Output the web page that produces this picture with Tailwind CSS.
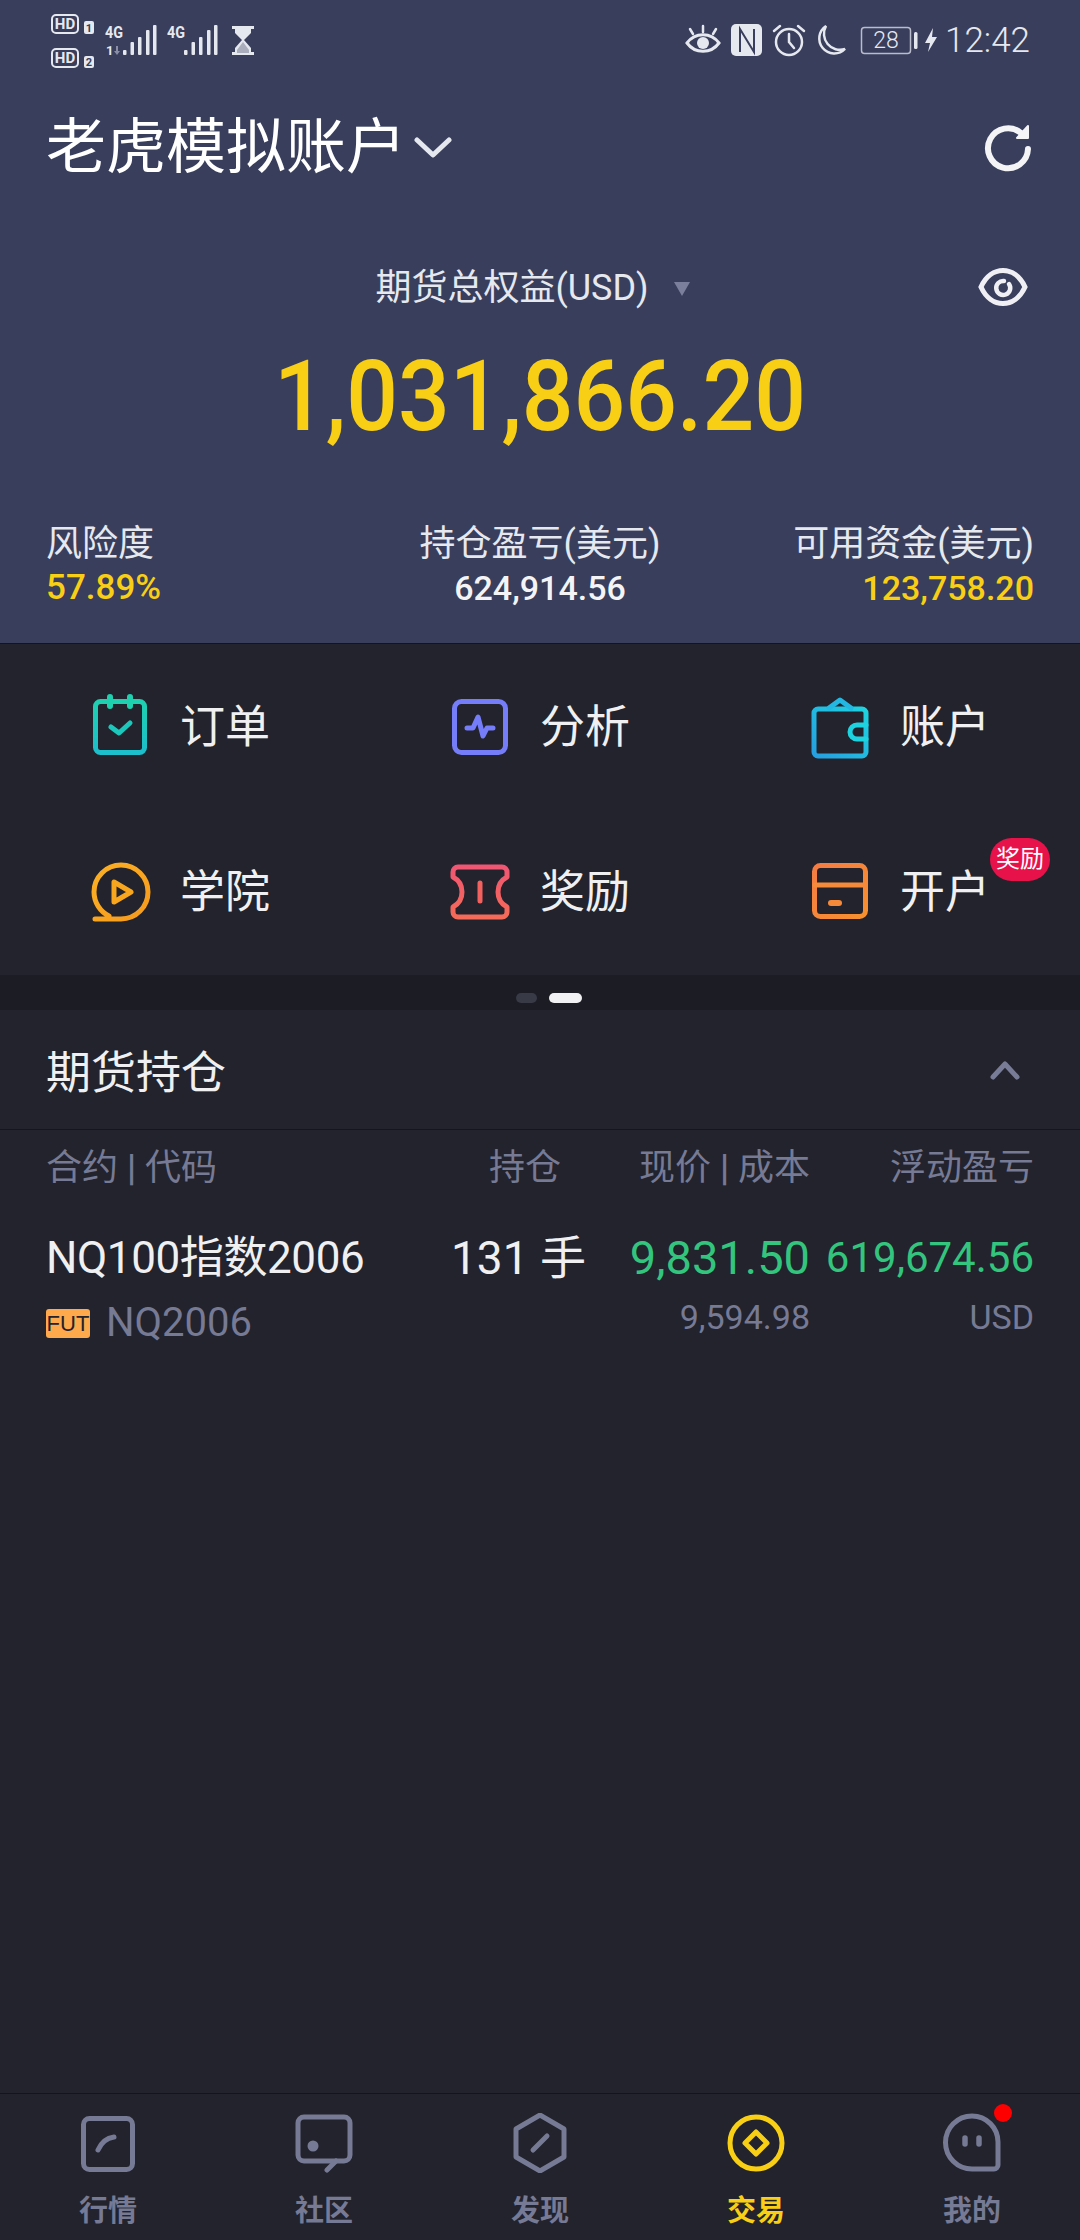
<!doctype html>
<html>
<head>
  <meta charset="UTF-8">
  <meta name="viewport" content="width=device-width, initial-scale=1.0">
  <script src="https://cdn.jsdelivr.net/npm/@tailwindcss/browser@4"></script>
</head>
<body class="bg-[#22232d] font-['Roboto','Noto_Sans_CJK_SC',sans-serif] text-[#f0f0f2] w-[1080px] h-[2240px] flex flex-col overflow-hidden">

  <!-- Header -->
  <div class="bg-[#383e5c] h-[643px] flex flex-col shrink-0">
    <!-- Status bar -->
    <div class="h-[68px] flex justify-between items-start relative">
      <svg width="270" height="68" viewBox="0 0 270 68" fill="#e6e8ef">
        <rect x="52" y="15" width="26" height="18" rx="4" fill="none" stroke="#e6e8ef" stroke-width="2"/>
        <text x="65" y="29" font-size="15" font-weight="700" text-anchor="middle" font-family="Roboto">HD</text>
        <rect x="84" y="21" width="10" height="13" rx="2"/>
        <text x="89" y="32" font-size="11" font-weight="700" text-anchor="middle" fill="#383e5c" font-family="Roboto">1</text>
        <rect x="52" y="49" width="26" height="18" rx="4" fill="none" stroke="#e6e8ef" stroke-width="2"/>
        <text x="65" y="63" font-size="15" font-weight="700" text-anchor="middle" font-family="Roboto">HD</text>
        <rect x="84" y="56" width="10" height="12" rx="2"/>
        <text x="89" y="66" font-size="11" font-weight="700" text-anchor="middle" fill="#383e5c" font-family="Roboto">2</text>
        <text x="105" y="38" font-size="17" font-weight="700" textLength="18" lengthAdjust="spacingAndGlyphs" font-family="Roboto">4G</text>
        <text x="106" y="55" font-size="13" font-weight="700" font-family="Roboto">1</text>
        <path d="M116 46v5h-2l3 4 3-4h-2v-5z" fill="#8b8fa6"/>
        <rect x="123" y="50" width="3.5" height="5" rx="1"/>
        <rect x="130.500" y="42" width="3.500" height="13" rx="1"/>
        <rect x="138" y="37" width="3.500" height="18" rx="1"/>
        <rect x="146" y="30" width="3.500" height="25" rx="1"/>
        <rect x="153" y="25" width="3.500" height="30" rx="1"/>
        <text x="167" y="38" font-size="17" font-weight="700" textLength="18" lengthAdjust="spacingAndGlyphs" font-family="Roboto">4G</text>
        <rect x="184" y="50" width="3.500" height="5" rx="1"/>
        <rect x="191.500" y="42" width="3.500" height="13" rx="1"/>
        <rect x="199" y="37" width="3.500" height="18" rx="1"/>
        <rect x="207" y="30" width="3.500" height="25" rx="1"/>
        <rect x="214" y="25" width="3.500" height="30" rx="1"/>
        <path d="M232 26h22v3h-3v4l-7 7 7 8v4h3v3h-22v-3h3v-4l7-8-7-7v-4h-3z"/>
        <path d="M243 42l-6 8v3h12v-3z" fill="#383e5c" opacity="0.35"/>
      </svg>
      <div class="flex items-start">
        <svg width="262" height="68" viewBox="680 0 262 68" fill="none" stroke="#e6e8ef" stroke-width="2.500">
          <path d="M688 43c8-11 24-11 32 0c-8 11-24 11-32 0z" stroke-width="3"/>
          <circle cx="704" cy="43" r="6" fill="#e6e8ef" stroke="none"/>
          <path d="M704 26v6M691 29l3 5M717 29l-3 5" stroke-linecap="round"/>
          <rect x="732" y="24" width="31" height="32" rx="5" fill="#e6e8ef" stroke="none"/>
          <path d="M741 52V29l14 23V29" stroke="#383e5c" stroke-width="2"/>
          <circle cx="790" cy="42" r="13"/>
          <path d="M790 34v8l5 6M775 31l6-5M805 31l-6-5" stroke-linecap="round"/>
          <path d="M827 26a15 15 0 1 0 19 23a16 16 0 0 1-19-23z"/>
          <rect x="862.500" y="27.500" width="49" height="26" rx="3" stroke="#b9bcca" stroke-width="1.500"/>
          <text x="887" y="48" font-size="23" font-family="Roboto" font-weight="300" text-anchor="middle" fill="#e6e8ef" stroke="none">28</text>
          <rect x="915" y="32" width="3.500" height="17" rx="1.500" fill="#e6e8ef" stroke="none"/>
          <path d="M934 28l-8 15h5l-2 9 9-15h-5z" fill="#e6e8ef" stroke="none"/>
        </svg>
        <span class="text-[35px] font-light text-[#e6e8ef] leading-[40px] mt-[21px] mr-[50px] ml-[4px]">12:42</span>
      </div>
    </div>

    <!-- Account title -->
    <div class="h-[106px] shrink-0 flex items-center justify-between pl-[46px] pr-[46px] mt-[27px]">
      <div class="flex items-center">
        <span class="text-[60px] leading-[80px] text-white">老虎模拟账户</span>
        <svg width="38" height="24" viewBox="0 0 38 24" class="ml-[8px]" fill="none" stroke="#e6e8ef" stroke-width="5" stroke-linecap="round" stroke-linejoin="round"><path d="M3 4l16 15L35 4"/></svg>
      </div>
      <svg width="50" height="50" viewBox="0 0 50 50" fill="none" stroke="#f4f4f7" stroke-width="6" stroke-linecap="round" stroke-linejoin="round" class="mr-[1px] mb-[2px]">
        <path d="M45 27a20 20 0 1 1-7-16"/>
        <path d="M45 4v12H34z" fill="#f4f4f7" stroke-width="2"/>
      </svg>
    </div>

    <!-- Total equity -->
    <div class="relative flex justify-center items-center mt-[62px] h-[50px] shrink-0 pr-[22px]">
      <span class="text-[36px] leading-[50px] text-[#e6e8ef] mr-[24px] ml-[8px]">期货总权益(USD)</span>
      <svg width="18" height="15" viewBox="0 0 18 15"><path d="M1 1h16l-8 14z" fill="#7b7f9b"/></svg>
      <svg width="50" height="40" viewBox="0 0 50 40" fill="none" stroke="#f0f0f4" stroke-width="5" class="absolute right-[52px] top-[4px]">
        <path d="M3 20C13 -2 37 -2 47 20C37 42 13 42 3 20z"/>
        <path d="M31 17a7 7 0 1 1-5-3" stroke-width="4.500" stroke-linecap="round"/>
      </svg>
    </div>
    <div class="text-[#f8cf14] text-[99px] font-medium leading-[116px] text-center scale-x-[0.92] mt-[25px] shrink-0">1,031,866.20</div>

    <!-- Stats -->
    <div class="grid grid-cols-3 px-[46px] mt-[67px] shrink-0">
      <div class="flex flex-col">
        <span class="text-[36px] leading-[46px] text-[#e6e8ef] whitespace-nowrap">风险度</span>
        <span class="text-[35px] leading-[42px] font-medium text-[#f8cf14]">57.89%</span>
      </div>
      <div class="flex flex-col items-center">
        <span class="text-[36px] leading-[46px] text-[#e6e8ef] whitespace-nowrap">持仓盈亏(美元)</span>
        <span class="text-[34px] leading-[42px] font-medium text-[#f4f4f7]">624,914.56</span>
      </div>
      <div class="flex flex-col items-end">
        <span class="text-[36px] leading-[46px] text-[#e6e8ef] whitespace-nowrap">可用资金(美元)</span>
        <span class="text-[34px] leading-[42px] font-medium text-[#f8cf14]">123,758.20</span>
      </div>
    </div>
  </div>

  <!-- Shortcut grid -->
  <div class="h-[332px] shrink-0 border-t border-[#14151b] grid grid-cols-3 grid-rows-2 pt-[1px]">
    <div class="flex items-center pl-[90px] text-[45px]">
      <svg width="60" height="62" viewBox="0 0 60 62" fill="none" stroke-width="5" stroke-linecap="round" stroke-linejoin="round" class="mr-[30px] mb-[6px]">
        <defs><linearGradient id="g1" x1="0" y1="0" x2="0" y2="1"><stop offset="0" stop-color="#1fd0b0"/><stop offset="1" stop-color="#1cbfcb"/></linearGradient></defs>
        <rect x="5.500" y="7.500" width="49" height="51" rx="5" stroke="url(#g1)"/>
        <path d="M20 3v9M40 3v9" stroke="#1fd0ae" stroke-width="6"/>
        <path d="M21 33l8 6 11-10" stroke="#1cc8bc"/>
      </svg>
      <span>订单</span>
    </div>
    <div class="flex items-center pl-[90px] text-[45px]">
      <svg width="60" height="58" viewBox="0 0 60 58" fill="none" stroke="#767df8" stroke-width="5" stroke-linecap="round" stroke-linejoin="round" class="mr-[30px] mb-[2px]">
        <rect x="4.500" y="3.500" width="51" height="51" rx="7"/>
        <path d="M17 30h6l5-11 5 19 4-8h6"/>
      </svg>
      <span>分析</span>
    </div>
    <div class="flex items-center pl-[90px] text-[45px]">
      <svg width="60" height="62" viewBox="0 0 60 62" fill="none" stroke-width="5" stroke-linecap="round" stroke-linejoin="round" class="mr-[30px]">
        <defs><linearGradient id="g2" x1="0" y1="1" x2="1" y2="0"><stop offset="0" stop-color="#269fe0"/><stop offset="1" stop-color="#1ed3e0"/></linearGradient></defs>
        <path d="M8 12h44a4 4 0 0 1 4 4v39a4 4 0 0 1-4 4H8a4 4 0 0 1-4-4V16a4 4 0 0 1 4-4z" stroke="url(#g2)"/>
        <path d="M19 11l11-8 11 8" stroke="#22b8e2"/>
        <path d="M56 28H47a7 7 0 0 0 0 14h9" stroke="#1ed3e0"/>
      </svg>
      <span>账户</span>
    </div>
    <div class="flex items-center pl-[90px] text-[45px]">
      <svg width="62" height="62" viewBox="0 0 62 62" fill="none" stroke-width="5" stroke-linecap="round" stroke-linejoin="round" class="mr-[28px] mb-[2px]">
        <defs><linearGradient id="g3" x1="0" y1="0" x2="1" y2="1"><stop offset="0" stop-color="#fbb024"/><stop offset="1" stop-color="#f79a1e"/></linearGradient></defs>
        <path d="M5 58h26a27 27 0 1 0-27-27a27 27 0 0 0 15 24" stroke="url(#g3)"/>
        <path d="M24 21v20l17-10z" stroke="#f9a61f"/>
      </svg>
      <span>学院</span>
    </div>
    <div class="flex items-center pl-[90px] text-[45px]">
      <svg width="60" height="56" viewBox="0 0 60 56" fill="none" stroke-width="5" stroke-linecap="round" stroke-linejoin="round" class="mr-[30px] mb-[2px]">
        <defs><linearGradient id="g4" x1="0" y1="0" x2="0" y2="1"><stop offset="0" stop-color="#f05672"/><stop offset="1" stop-color="#f56a58"/></linearGradient></defs>
        <path d="M8 3h44a5 5 0 0 1 5 5v5a17 17 0 0 0 0 30v5a5 5 0 0 1-5 5H8a5 5 0 0 1-5-5v-5a17 17 0 0 0 0-30V8a5 5 0 0 1 5-5z" stroke="url(#g4)"/>
        <path d="M30 19v18" stroke="#f3615f"/>
      </svg>
      <span>奖励</span>
    </div>
    <div class="flex items-center pl-[90px] text-[45px] relative">
      <svg width="60" height="58" viewBox="0 0 60 58" fill="none" stroke-width="5" stroke-linecap="round" stroke-linejoin="round" class="mr-[30px] mb-[4px]">
        <defs><linearGradient id="g5" x1="0" y1="0" x2="1" y2="1"><stop offset="0" stop-color="#f47c44"/><stop offset="1" stop-color="#f8902e"/></linearGradient></defs>
        <rect x="4.500" y="3.500" width="51" height="51" rx="6" stroke="url(#g5)"/>
        <path d="M5 23h50" stroke="#f58a3a"/>
        <path d="M21 41h8" stroke="#f58a3a" stroke-width="6"/>
      </svg>
      <span>开户</span>
      <span class="absolute left-[270px] top-[28px] w-[60px] h-[43px] rounded-full bg-[#e8124a] text-white text-[24px] leading-[43px] text-center">奖励</span>
    </div>
  </div>

  <!-- Pager strip -->
  <div class="h-[35px] shrink-0 bg-[#1b1c24] flex items-center justify-center pl-[18px] pt-[11px] gap-[12px]">
    <div class="w-[21px] h-[10px] rounded-full bg-[#383a46]"></div>
    <div class="w-[33px] h-[10px] rounded-full bg-[#f0f0f2]"></div>
  </div>

  <!-- Positions -->
  <div class="flex-1 flex flex-col">
    <div class="h-[120px] shrink-0 flex items-center justify-between px-[46px] pt-[8px] border-b border-[#15161d]">
      <span class="text-[45px]">期货持仓</span>
      <svg width="30" height="20" viewBox="0 0 30 20" fill="none" stroke="#787c96" stroke-width="5" stroke-linecap="round" stroke-linejoin="round" class="mr-[14px] mb-[8px]"><path d="M3 17L15 4l12 13"/></svg>
    </div>
    <div class="grid grid-cols-[374px_180px_210px_224px] px-[46px] text-[#767a94] text-[36px] leading-[50px] mt-[13px]">
      <span>合约 <b class="font-bold">|</b> 代码</span>
      <span class="text-right pr-[39px]">持仓</span>
      <span class="text-right">现价 <b class="font-bold">|</b> 成本</span>
      <span class="text-right">浮动盈亏</span>
    </div>
    <div class="grid grid-cols-[374px_180px_210px_224px] items-center px-[46px] text-[44px] leading-[56px] mt-[37px]">
      <span class="tracking-[-0.4px]">NQ100指数2006</span>
      <span class="text-left pl-[31px] text-[46px] whitespace-nowrap">131 手</span>
      <span class="text-right text-[47px] text-[#33c57d]">9,831.50</span>
      <span class="text-right text-[42px] text-[#33c57d]">619,674.56</span>
    </div>
    <div class="grid grid-cols-[374px_180px_210px_224px] px-[46px] text-[#767a94] text-[34px] leading-[46px] mt-[8px]">
      <div class="flex items-center text-[40px] h-[46px] mt-[6px]">
        <span class="w-[44px] h-[29px] rounded-[3px] bg-[#ffa94d] text-[#22232d] text-[22px] leading-[29px] text-center mr-[16px] font-['Liberation_Sans',sans-serif]">FUT</span>
        <span>NQ2006</span>
      </div>
      <span></span>
      <span class="text-right">9,594.98</span>
      <span class="text-right">USD</span>
    </div>
  </div>

  <!-- Bottom nav -->
  <div class="h-[147px] shrink-0 border-t border-[#14151b] grid grid-cols-5 text-[#767a94] text-[29px] font-bold">
    <div class="flex flex-col items-center pt-[19px]">
      <svg width="60" height="60" viewBox="0 0 60 60" fill="none" stroke="#767a94" stroke-width="5" stroke-linecap="round">
        <rect x="5.500" y="5.500" width="49" height="51" rx="6"/>
        <path d="M20 37c3-7 9-12 16-13"/>
      </svg>
      <span class="leading-[40px] mt-[18px]">行情</span>
    </div>
    <div class="flex flex-col items-center pt-[19px]">
      <svg width="60" height="60" viewBox="0 0 60 60" fill="none" stroke="#767a94" stroke-width="5" stroke-linecap="round" stroke-linejoin="round">
        <path d="M10 4h40a6 6 0 0 1 6 6v32a6 6 0 0 1-6 6H10a6 6 0 0 1-6-6V10a6 6 0 0 1 6-6z"/>
        <path d="M42 48l-9 9"/>
        <circle cx="19" cy="33" r="5.500" fill="#767a94" stroke="none"/>
      </svg>
      <span class="leading-[40px] mt-[18px]">社区</span>
    </div>
    <div class="flex flex-col items-center pt-[19px]">
      <svg width="60" height="60" viewBox="0 0 60 60" fill="none" stroke="#767a94" stroke-width="5" stroke-linecap="round" stroke-linejoin="round">
        <path d="M30 2l24 14v28L30 58 6 44V16z"/>
        <path d="M23 37l14-14"/>
      </svg>
      <span class="leading-[40px] mt-[18px]">发现</span>
    </div>
    <div class="flex flex-col items-center pt-[19px] text-[#f8cf14]">
      <svg width="60" height="60" viewBox="0 0 60 60" fill="none" stroke="#f8cf14" stroke-width="5" stroke-linejoin="round">
        <circle cx="30" cy="30" r="26"/>
        <path d="M30 19l11 11-11 11-11-11z"/>
      </svg>
      <span class="leading-[40px] mt-[18px]">交易</span>
    </div>
    <div class="flex flex-col items-center pt-[19px] relative">
      <svg width="60" height="60" viewBox="0 0 60 60" fill="none" stroke="#767a94" stroke-width="5" stroke-linecap="round">
        <path d="M30 3a26 26 0 0 1 26 26v23a4 4 0 0 1-4 4H30A26.500 26.500 0 0 1 30 3z"/>
        <path d="M23 25v6M37 25v6" stroke-width="5.500"/>
      </svg>
      <span class="leading-[40px] mt-[18px]">我的</span>
      <span class="absolute left-[130px] top-[10px] w-[18px] h-[18px] rounded-full bg-[#ff0000]"></span>
    </div>
  </div>

</body>
</html>
